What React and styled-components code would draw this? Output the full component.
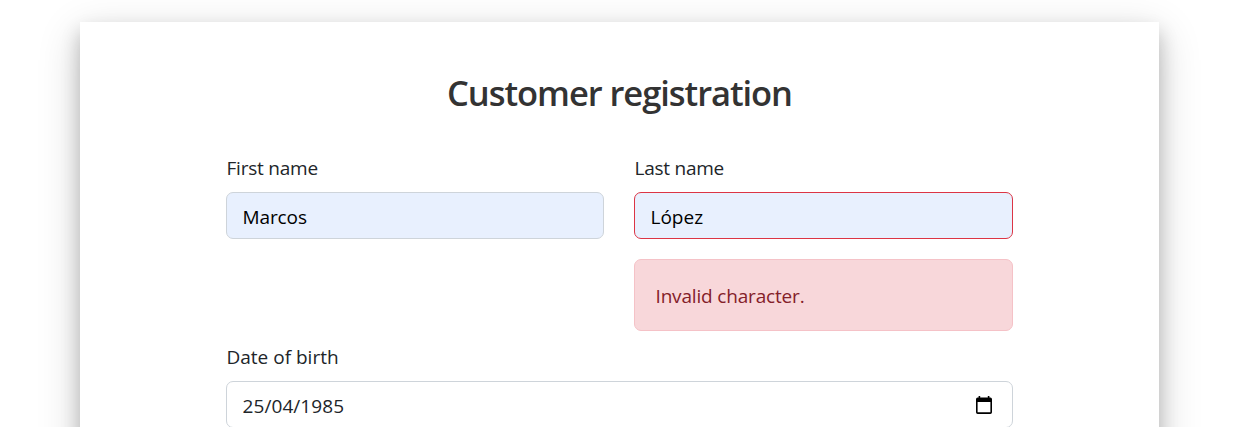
import React from "react";
import styled, { createGlobalStyle } from "styled-components";

const GlobalStyle = createGlobalStyle`
  *, *::before, *::after { box-sizing: border-box; }
  html, body { margin: 0; background: #fff; }
  body {
    font-family: "Segoe UI", "Open Sans", "Noto Sans", sans-serif;
    font-size: 19px;
    line-height: 30px;
    color: #212529;
  }
`;

const Page = styled.main`
  height: 100vh;
  overflow: hidden;
  padding: 22px 0 0 80px;
`;

const Card = styled.section`
  width: 1079px;
  height: 600px;
  padding: 47px 146px 0;
  background: #fff;
  box-shadow: 0 10px 18px 0 rgba(0, 0, 0, 0.2), 0 12px 40px 0 rgba(0, 0, 0, 0.19);
`;

const Title = styled.h1`
  margin: 0 0 37px;
  font-size: 34.5px;
  font-weight: 600;
  line-height: 47px;
  letter-spacing: -1.05px;
  text-align: center;
  color: #333;
`;

const Form = styled.form`
  display: grid;
  grid-template-columns: 378px 1fr;
  column-gap: 30px;
`;

const Field = styled.div`
  grid-column: ${(p) => (p.$wide ? "1 / -1" : "auto")};
  display: flex;
  flex-direction: column;
`;

const Label = styled.label`
  margin-bottom: 9px;
  padding-left: 0.5px;
  letter-spacing: ${(p) => p.$tracking || "0"};
`;

const Control = styled.div`
  display: flex;
  align-items: center;
  height: 47px;
  padding: 0 20px 0 15.5px;
  border: 1px solid ${(p) => (p.$invalid ? "#dc3545" : "#ced4da")};
  border-radius: 7px;
  background: ${(p) => (p.$filled ? "#e8f0fe" : "#fff")};
`;

const Input = styled.input`
  flex: 1;
  min-width: 0;
  height: 30px;
  padding: 0;
  margin-top: 3px;
  border: 0;
  outline: 0;
  background: transparent;
  font: inherit;
  letter-spacing: ${(p) => p.$tracking || "0"};
  color: ${(p) => (p.$dark ? "#000" : "#212529")};
`;

const Alert = styled.div`
  height: 72px;
  margin: 20px 0 11px;
  padding: 21px 20.5px;
  border: 1px solid #f5c2c7;
  border-radius: 7px;
  background: #f8d7da;
  letter-spacing: -0.17px;
  color: #842029;
`;

const CalendarIcon = () => (
  <svg width="16" height="18" viewBox="0 0 16 18" aria-hidden="true">
    <path
      fill="#000"
      fillRule="evenodd"
      d="M2.6 0h1.6v1.6h7.6V0h1.6v1.6h.9A1.7 1.7 0 0 1 16 3.3v12.9a1.7 1.7 0 0 1-1.7 1.7H1.7A1.7 1.7 0 0 1 0 16.2V3.3A1.7 1.7 0 0 1 1.7 1.6h.9zM1.6 6v10.300h12.800V6z"
    />
  </svg>
);

export default function App() {
  return (
    <>
      <GlobalStyle />
      <Page>
        <Card>
          <Title>Customer registration</Title>
          <Form>
            <Field>
              <Label htmlFor="first" $tracking="-0.22px">First name</Label>
              <Control $filled>
                <Input id="first" defaultValue="Marcos" $tracking="-0.1px" $dark />
              </Control>
            </Field>
            <Field>
              <Label htmlFor="last" $tracking="-0.25px">Last name</Label>
              <Control $filled $invalid>
                <Input id="last" defaultValue="López" $dark />
              </Control>
              <Alert role="alert">Invalid character.</Alert>
            </Field>
            <Field $wide>
              <Label htmlFor="birth">Date of birth</Label>
              <Control>
                <Input id="birth" defaultValue="25/04/1985" $tracking="0.08px" />
                <CalendarIcon />
              </Control>
            </Field>
          </Form>
        </Card>
      </Page>
    </>
  );
}
